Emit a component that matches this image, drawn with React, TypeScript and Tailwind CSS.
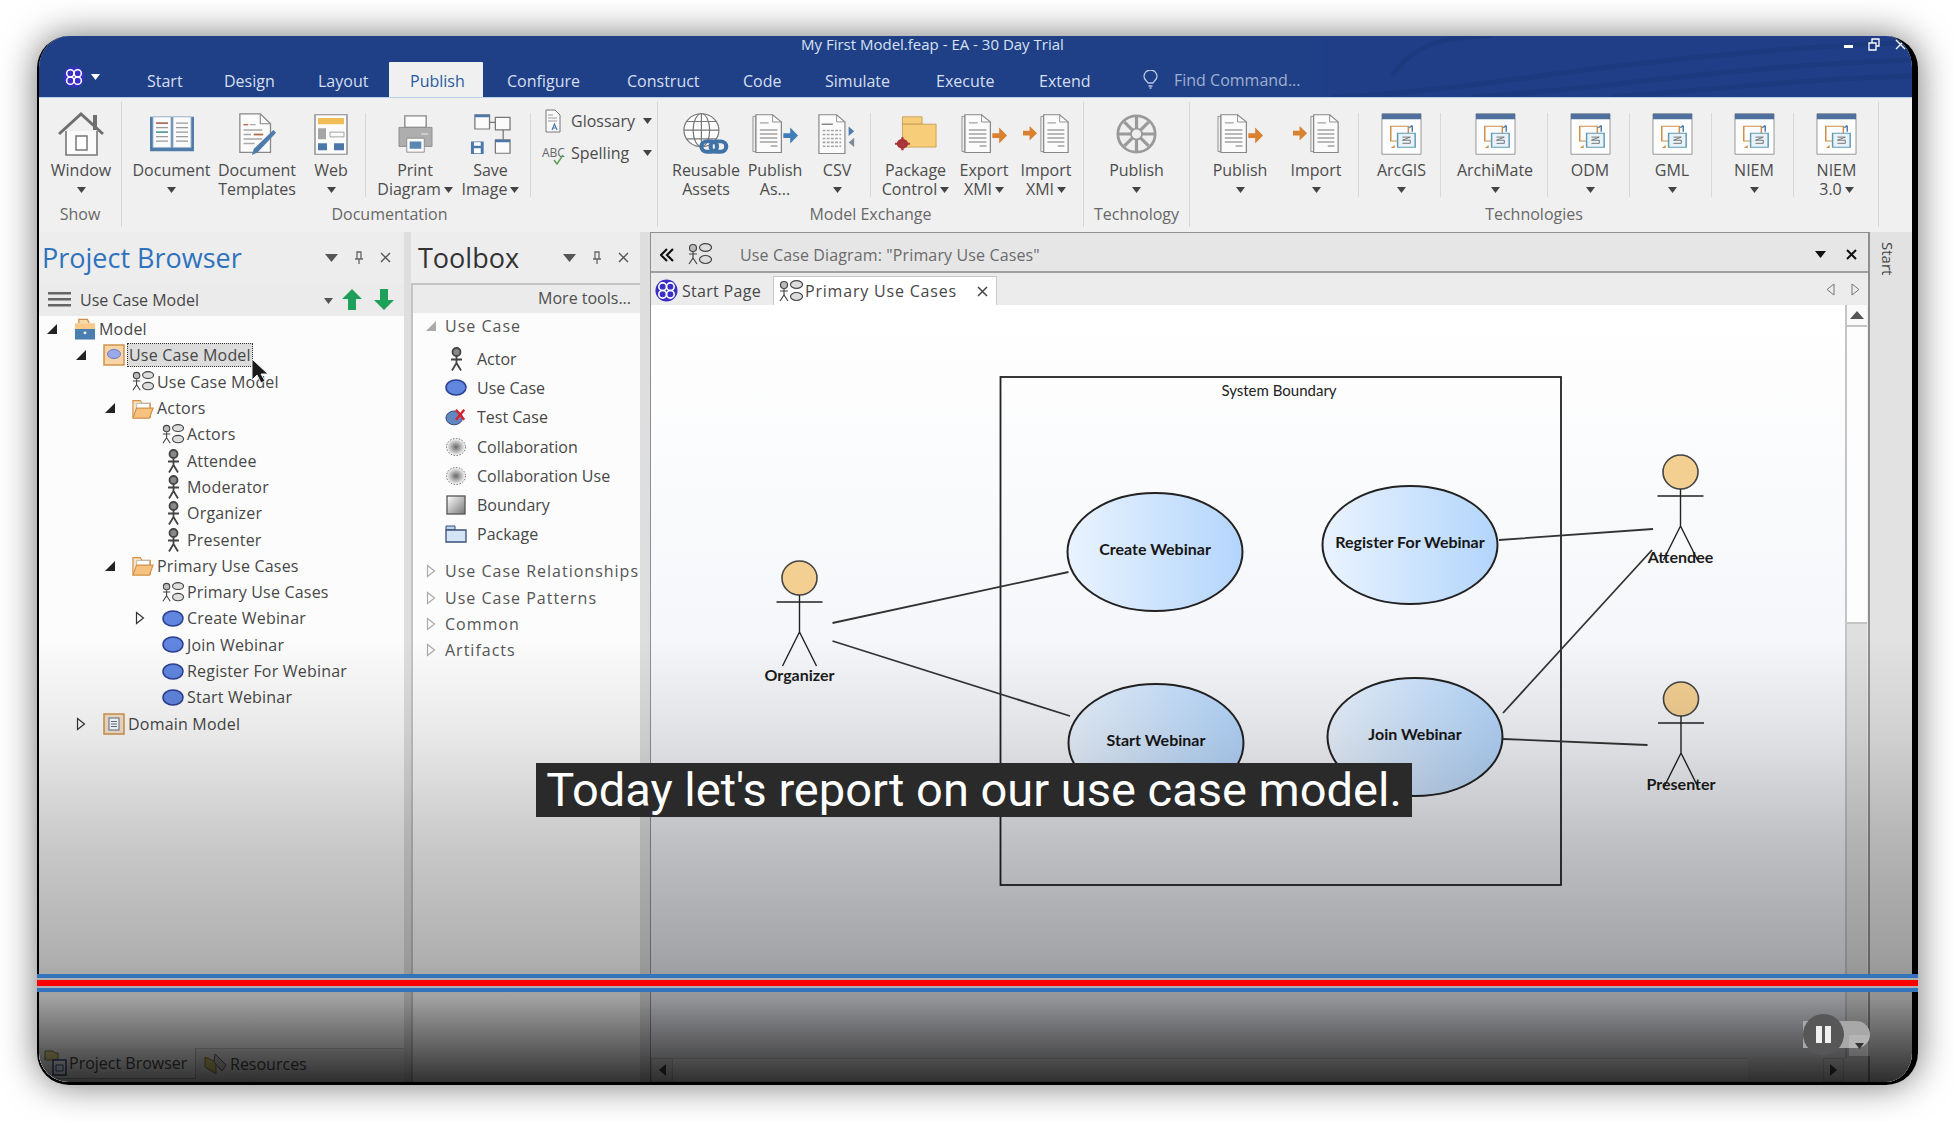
import React from "react";

const Caret = ({ c = "#444" }: { c?: string }) => (
  <svg width="9" height="6" viewBox="0 0 9 6" className="inline-block shrink-0"><path d="M0 0h9L4.5 6z" fill={c} /></svg>
);

const House = () => (
  <svg width="46" height="46" viewBox="0 0 46 46" fill="none">
    <path d="M8 20v24h31V20" fill="#fbfbfb" stroke="#777" strokeWidth="1.6" />
    <path d="M1 23 23 3l22 20" stroke="#6f6f6f" strokeWidth="3" />
    <path d="M35 4h4v15h-4z" fill="#6f6f6f" />
    <path d="M18 25h11v14H18z" fill="#fff" stroke="#777" strokeWidth="1.5" />
  </svg>
);
const Book = () => (
  <svg width="46" height="38" viewBox="0 0 46 42" preserveAspectRatio="none" fill="none">
    <path d="M1 2h44v38H1z" fill="#4f7cab" />
    <path d="M4 2h18v34H4zM24 2h18v34H24z" fill="#fafafa" stroke="#9db4c9" />
    <path d="M7 9h12M7 14h12M7 19h12M7 24h12M7 29h12" stroke="#999" strokeWidth="1.4" />
    <path d="M7 9h12" stroke="#b35a45" strokeWidth="1.4" />
    <path d="M7 19h12" stroke="#3f9a93" strokeWidth="1.4" />
    <path d="M27 9h12M27 14h12M27 19h12M27 24h12M27 29h12" stroke="#999" strokeWidth="1.4" />
  </svg>
);
const DocPen = () => (
  <svg width="39" height="43" viewBox="0 0 42 48" preserveAspectRatio="none" fill="none">
    <path d="M2 1h22l11 11v32H2z" fill="#fbfbfb" stroke="#888" strokeWidth="1.4" />
    <path d="M24 1v11h11" stroke="#888" strokeWidth="1.2" />
    <path d="M6 13h5M13 13h6M6 19h20M6 24h8M17 24h10M6 29h20M6 34h12" stroke="#a8a8a8" strokeWidth="1.5" />
    <path d="M6 13h5M17 24h10" stroke="#b9673f" strokeWidth="1.5" />
    <path d="M38 19 41 22 21 44l-6 3 2-7z" fill="#4f7cab" />
  </svg>
);
const Web = () => (
  <svg width="34" height="41" viewBox="0 0 34 52" preserveAspectRatio="none" fill="none">
    <path d="M1 1h32v50H1z" fill="#fbfbfb" stroke="#888" strokeWidth="1.4" />
    <path d="M4 5h26v8H4z" fill="#f0bc58" />
    <path d="M4 18h8v14H4z" fill="#a5a5a5" />
    <path d="M16 23h14v6H16z" stroke="#999" />
    <path d="M4 37h9v9H4zM20 37h10v9H20z" fill="#4a78ab" />
  </svg>
);
const Printer = () => (
  <svg width="35" height="38" viewBox="0 0 36 46" preserveAspectRatio="none" fill="none">
    <path d="M7 1h22v14H7z" fill="#fbfbfb" stroke="#888" strokeWidth="1.4" />
    <path d="M1 15h34v23H1z" fill="#aeaeae" stroke="#8a8a8a" />
    <path d="M24 23h7" stroke="#eee" strokeWidth="1.4" />
    <path d="M9 28h18v17H9z" fill="#fbfbfb" stroke="#888" />
    <path d="M12 32h12v9H12z" fill="#5a86b2" />
  </svg>
);
const SaveImg = () => (
  <svg width="41" height="40" viewBox="0 0 42 48" preserveAspectRatio="none" fill="none">
    <path d="M5 1h15v17H5z" fill="#fbfbfb" stroke="#777" strokeWidth="1.3" />
    <path d="M5 1h15v3H5z" fill="#4a78ab" />
    <path d="M26 4h15v15H26z" fill="#fbfbfb" stroke="#777" strokeWidth="1.3" />
    <path d="M20 10h6M34 19v12" stroke="#777" strokeWidth="1.3" />
    <path d="M26 31h15v16H26z" fill="#fbfbfb" stroke="#777" strokeWidth="1.3" />
    <path d="M26 31h15v3H26z" fill="#4a78ab" />
    <path d="M1 33h13v15H1z" fill="#4a78ab" />
    <path d="M4 34h7v4H4zM4 41h7v6H4z" fill="#fff" />
  </svg>
);
const Glossary = () => (
  <svg width="16" height="24" viewBox="0 0 16 24" fill="none">
    <path d="M1 1h9l5 5v17H1z" fill="#fbfbfb" stroke="#777" />
    <path d="M3 6h5M3 9h9M3 12h9" stroke="#999" />
    <path d="M7 21l2.500-6 2.500 6M8 19h3" stroke="#4a78ab" strokeWidth="1.2" />
  </svg>
);
const Globe = () => (
  <svg width="46" height="45" viewBox="0 0 50 52" preserveAspectRatio="none" fill="none">
    <g stroke="#777" strokeWidth="1.3" fill="#fdfdfd">
      <circle cx="20" cy="21" r="19" />
      <ellipse cx="20" cy="21" rx="9" ry="19" />
      <path d="M20 2v38M1 21h38M4 11h32M4 31h32" />
    </g>
    <rect x="20" y="34" width="17" height="12" rx="6" stroke="#3f73a8" strokeWidth="4.5" fill="none" />
    <rect x="30" y="34" width="17" height="12" rx="6" stroke="#3f73a8" strokeWidth="4.5" fill="none" />
  </svg>
);
const DocBase = ({ lines = true }: { lines?: boolean }) => (
  <g>
    <path d="M1 3h3v44H1z" fill="#eee" stroke="#888" />
    <path d="M4 1h17l9 9v38H4z" fill="#fbfbfb" stroke="#888" strokeWidth="1.3" />
    <path d="M21 1v9h9" stroke="#888" />
    {lines && <path d="M8 11h9M8 20h18M8 25h18M8 30h18M8 35h18M19 40h7" stroke="#a3a3a3" strokeWidth="1.6" />}
  </g>
);
const DocArrow = ({ c }: { c: string }) => (
  <svg width="47" height="40" viewBox="0 0 48 50" preserveAspectRatio="none" fill="none">
    <DocBase />
    <path d="M32 24h7v-7l8 10-8 10v-7h-7z" fill={c} />
  </svg>
);
const ImportDoc = () => (
  <svg width="47" height="40" viewBox="0 0 50 50" preserveAspectRatio="none" fill="none">
    <path d="M0 21h7v-6l8 9-8 9v-6H0z" fill="#d9812f" />
    <g transform="translate(18 0)"><DocBase /></g>
  </svg>
);
const Csv = () => (
  <svg width="39" height="41" viewBox="0 0 42 52" preserveAspectRatio="none" fill="none">
    <path d="M1 1h19l9 9v40H1z" fill="#fbfbfb" stroke="#888" strokeWidth="1.3" />
    <path d="M20 1v9h9" stroke="#888" />
    <path d="M4 13h12" stroke="#888" strokeWidth="2" />
    <path d="M5 21h20M5 26h20M5 31h20M5 36h20M5 41h20" stroke="#a3a3a3" strokeWidth="2" strokeDasharray="3 1.500" />
    <path d="M33 16l6 6-6 6z" fill="#4f7cab" />
    <path d="M39 30l-6 6 6 6z" fill="#7c8b9a" />
  </svg>
);
const Pkg = () => (
  <svg width="43" height="36" viewBox="-2 0 46 44" preserveAspectRatio="none" fill="none">
    <path d="M7 1h21v9H7z" fill="#f8cd79" stroke="#c39c55" />
    <path d="M7 10h36v28H7z" fill="#f8cd79" stroke="#c39c55" />
    <circle cx="7" cy="34" r="6" fill="#a8343a" />
    <circle cx="7" cy="34" r="2" fill="#f2d0c0" />
    <path d="M7 26v16M-1 34h16" stroke="#a8343a" strokeWidth="2.500" />
  </svg>
);
const Wheel = () => (
  <svg width="41" height="40" viewBox="0 0 44 44" preserveAspectRatio="none" fill="none" stroke="#9a9a9a">
    <circle cx="22" cy="22" r="20" strokeWidth="3" fill="#efefef" />
    <circle cx="22" cy="22" r="6" strokeWidth="2" fill="#efefef" />
    <path d="M22 3v13M22 28v13M3 22h13M28 22h13M9 9l9 9M26 26l9 9M35 9l-9 9M18 26l-9 9" strokeWidth="3.500" />
  </svg>
);
const Tech = () => (
  <svg width="41" height="42" viewBox="0 0 42 54" preserveAspectRatio="none" fill="none">
    <path d="M1 1h40v52H1z" fill="#fdfdfd" stroke="#8a8a8a" />
    <path d="M1 1h40v7H1z" fill="#4f6f9c" />
    <path d="M10 17h18v19H10z" stroke="#cf8f48" strokeWidth="1.500" />
    <path d="M17 26h18v18H17z" fill="#e8f2f8" stroke="#5f9ab5" strokeWidth="1.500" />
    <path d="M22 31h8l-8 4h8v4h-8" stroke="#666" />
    <path d="M32 16v8M32 16l-3 3" stroke="#4f7cab" strokeWidth="1.500" />
    <path d="M10 45l4-4v4z" fill="#cf8f48" />
  </svg>
);
const MiniDiagram = () => (
  <svg width="24" height="23" viewBox="0 0 24 23" fill="none" stroke="#444" strokeWidth="1.200">
    <circle cx="5" cy="5" r="3.500" fill="#bbb" />
    <path d="M5 9v6M1 11h8M5 15l-4 6M5 15l4 6" />
    <ellipse cx="17.500" cy="4.500" rx="6" ry="3.800" fill="#ddd" />
    <ellipse cx="17.500" cy="16.500" rx="6" ry="4" fill="#ddd" />
  </svg>
);
const LogoMark = ({ s = 22 }: { s?: number }) => (
  <svg width={s} height={s} viewBox="0 0 24 24" fill="none">
    <circle cx="12" cy="12" r="11.500" fill="#3a2fc4" />
    <g stroke="#fff" strokeWidth="1.700">
      <circle cx="8" cy="8" r="4" />
      <circle cx="16" cy="8" r="4" />
      <circle cx="8" cy="16" r="4" />
      <circle cx="16" cy="16" r="4" />
    </g>
  </svg>
);

type ItemP = { w: string; icon?: React.ReactNode; a: string; b?: string; caret?: boolean; pl?: string };
const Item = ({ w, icon, a, b, caret, pl = "" }: ItemP) => (
  <div className={`${w} ${pl} shrink-0 flex flex-col items-center pt-[8px] whitespace-nowrap`}>
    <div className="h-[48px] flex items-center justify-center">{icon}</div>
    <div className="h-[19px] mt-[3px] leading-[19px]">{a}</div>
    <div className="h-[19px] leading-[19px] flex items-center gap-[3px]">
      {b && <span>{b}</span>}
      {caret && <Caret />}
    </div>
  </div>
);
const Sep = ({ m = "" }: { m?: string }) => <div className={`w-px shrink-0 h-[84px] mt-[11px] bg-[#d8d8d8] ${m}`} />;

const Group = ({ w, label, children }: { w: string; label: string; children: React.ReactNode }) => (
  <div className={`${w} shrink-0 h-[125px] mt-[4px] border-r border-[#d6d6d6] flex flex-col`}>
    <div className="flex h-[102px]">{children}</div>
    <div className="text-center text-[16px] leading-[20px] text-[#686868] whitespace-nowrap">{label}</div>
  </div>
);

const tabs = [
  { t: "Start", c: "w-[77px]" },
  { t: "Design", c: "w-[94px]" },
  { t: "Layout", c: "w-[71px]" },
  { t: "Publish", c: "w-[94px] pl-[21px] bg-[#f0f0f0] text-[#2b5a9e] h-[35px] rounded-t-[1px]" },
  { t: "Configure", c: "w-[144px] pl-[24px]" },
  { t: "Construct", c: "w-[116px]" },
  { t: "Code", c: "w-[82px]" },
  { t: "Simulate", c: "w-[111px]" },
  { t: "Execute", c: "w-[103px]" },
  { t: "Extend", c: "w-[111px]" },
];

const Arrow = ({ open, light }: { open: boolean; light?: boolean }) =>
  open ? (
    <svg width="12" height="12" viewBox="0 0 12 12"><path d="M11 1v10H1z" fill={light ? "#aaa" : "#222"} /></svg>
  ) : (
    <svg width="10" height="14" viewBox="0 0 10 14" fill="none"><path d="M1.500 1.500 8.500 7l-7 5.500z" stroke={light ? "#aaa" : "#333"} strokeWidth="1.200" /></svg>
  );

const TActor = () => (
  <svg width="13" height="24" viewBox="0 0 13 24" fill="none" stroke="#444" strokeWidth="1.800">
    <circle cx="6.500" cy="5" r="4" fill="#888" />
    <path d="M6.500 9v8M1 12.500h11M6.500 16l-4.500 7.500M6.500 16l4.500 7.500" />
  </svg>
);
const TUC = () => (
  <svg width="22" height="17" viewBox="0 0 22 17"><ellipse cx="11" cy="8.500" rx="10" ry="7.500" fill="#6186e0" stroke="#2b3f8f" strokeWidth="1.500" /></svg>
);
const TFolder = () => (
  <svg width="24" height="23" viewBox="0 0 24 23" fill="none">
    <path d="M1 3h8l2 3h9v15H1z" fill="#f6e3c5" stroke="#d4914a" strokeWidth="1.300" />
    <path d="M5 6h14v6H5z" fill="#fff" stroke="#aaa" strokeWidth=".8" />
    <path d="M1 22 5 11h18l-4 11z" fill="#f7c27f" stroke="#d4914a" strokeWidth="1.300" />
  </svg>
);
const TModel = () => (
  <svg width="23" height="23" viewBox="0 0 23 23" fill="none">
    <path d="M5 5V1h9l2 4" stroke="#c8914a" strokeWidth="1.300" fill="#f7d9a8" />
    <path d="M1 5h21v8H1z" fill="#f8c98a" />
    <path d="M1 11h21v11H1z" fill="#4a7eae" />
    <circle cx="11.500" cy="15" r="1.500" fill="#fff" />
  </svg>
);
const TUCPkg = () => (
  <svg width="22" height="22" viewBox="0 0 22 22">
    <rect x="1" y="1" width="20" height="20" fill="#f7d3a8" stroke="#cf924c" strokeWidth="1.500" />
    <ellipse cx="11" cy="10" rx="6.500" ry="4.500" fill="#9aa9ea" stroke="#6a7cc6" />
  </svg>
);
const TDomain = () => (
  <svg width="22" height="22" viewBox="0 0 22 22" fill="none">
    <rect x="1" y="1" width="20" height="20" fill="#f3e1c8" stroke="#cf924c" strokeWidth="1.500" />
    <rect x="6" y="5" width="10" height="12" fill="#fff" stroke="#5f6f8a" />
    <path d="M8 8.500h6M8 11h6M8 13.500h6" stroke="#5f6f8a" />
  </svg>
);

const tree: { t: string; lv: string; arrow?: "o" | "c"; ic: React.ReactNode; sel?: boolean }[] = [
  { t: "Model", lv: "pl-[3px]", arrow: "o", ic: <TModel /> },
  { t: "Use Case Model", lv: "pl-[32px]", arrow: "o", ic: <TUCPkg />, sel: true },
  { t: "Use Case Model", lv: "pl-[61px]", ic: <MiniDiagram /> },
  { t: "Actors", lv: "pl-[61px]", arrow: "o", ic: <TFolder /> },
  { t: "Actors", lv: "pl-[91px]", ic: <MiniDiagram /> },
  { t: "Attendee", lv: "pl-[91px]", ic: <TActor /> },
  { t: "Moderator", lv: "pl-[91px]", ic: <TActor /> },
  { t: "Organizer", lv: "pl-[91px]", ic: <TActor /> },
  { t: "Presenter", lv: "pl-[91px]", ic: <TActor /> },
  { t: "Primary Use Cases", lv: "pl-[61px]", arrow: "o", ic: <TFolder /> },
  { t: "Primary Use Cases", lv: "pl-[91px]", ic: <MiniDiagram /> },
  { t: "Create Webinar", lv: "pl-[91px]", arrow: "c", ic: <TUC /> },
  { t: "Join Webinar", lv: "pl-[91px]", ic: <TUC /> },
  { t: "Register For Webinar", lv: "pl-[91px]", ic: <TUC /> },
  { t: "Start Webinar", lv: "pl-[91px]", ic: <TUC /> },
  { t: "Domain Model", lv: "pl-[32px]", arrow: "c", ic: <TDomain /> },
];

const Collab = () => (
  <svg width="22" height="20" viewBox="0 0 22 20" fill="none">
    <defs>
      <radialGradient id="cg"><stop offset="0" stopColor="#666" /><stop offset="1" stopColor="#fafafa" /></radialGradient>
    </defs>
    <ellipse cx="11" cy="10" rx="9.500" ry="8.500" stroke="#666" strokeDasharray="1.500 1.500" fill="url(#cg)" />
  </svg>
);
const BoxIc = () => (
  <svg width="20" height="20" viewBox="0 0 20 20"><defs><linearGradient id="bg1" x1="0" y1="0" x2="1" y2="1"><stop offset="0" stopColor="#fff" /><stop offset="1" stopColor="#777" /></linearGradient></defs><rect x="1" y="1" width="18" height="18" fill="url(#bg1)" stroke="#555" strokeWidth="1.300" /></svg>
);
const PkgIc = () => (
  <svg width="22" height="18" viewBox="0 0 22 18" fill="none"><path d="M1 1h9v4H1z" fill="#bcd3ee" stroke="#3a4f7a" /><path d="M1 5h20v12H1z" fill="#d5e4f6" stroke="#3a4f7a" strokeWidth="1.300" /></svg>
);
const TestIc = () => (
  <svg width="24" height="20" viewBox="0 0 24 20"><ellipse cx="10" cy="11" rx="9" ry="7.500" fill="#6186c0" stroke="#2b3f6f" /><path d="M12 2l9 11M21 2l-9 11" stroke="#d8232a" strokeWidth="2.500" /></svg>
);
const tools = [
  { t: "Actor", i: <TActor /> },
  { t: "Use Case", i: <TUC /> },
  { t: "Test Case", i: <TestIc /> },
  { t: "Collaboration", i: <Collab /> },
  { t: "Collaboration Use", i: <Collab /> },
  { t: "Boundary", i: <BoxIc /> },
  { t: "Package", i: <PkgIc /> },
];

const PanelControls = () => (
  <div className="flex items-center gap-[16px] text-[#555]">
    <svg width="13" height="8" viewBox="0 0 13 8"><path d="M0 0h13L6.500 8z" fill="#555" /></svg>
    <svg width="10" height="14" viewBox="0 0 10 14" fill="none" stroke="#666" strokeWidth="1.300"><path d="M3 1h4v7H3zM1 8h8M5 8v5" /></svg>
    <svg width="11" height="11" viewBox="0 0 11 11" stroke="#555" strokeWidth="1.400"><path d="M1 1l9 9M10 1l-9 9" /></svg>
  </div>
);

const diagramFont = "Lato,'Liberation Sans',sans-serif";

const Actor = ({ x, top, label, ly }: { x: number; top: number; label: string; ly: number }) => (
  <g stroke="#222" strokeWidth="1.400" fill="none">
    <ellipse cx={x} cy={top + 17} rx="17.500" ry="17" fill="#f3cf92" stroke="#444" strokeWidth="1.600" />
    <path d={`M${x} ${top + 34}V${top + 71}M${x - 23} ${top + 41}H${x + 23}M${x} ${top + 71}L${x - 17} ${top + 105}M${x} ${top + 71}L${x + 17} ${top + 105}`} />
    <text x={x} y={ly} textAnchor="middle" fontSize="16" fontWeight="700" fill="#1c1c1c" stroke="none" fontFamily={diagramFont}>{label}</text>
  </g>
);
const UseCase = ({ cx, cy, t }: { cx: number; cy: number; t: string }) => (
  <g>
    <ellipse cx={cx} cy={cy} rx="87.500" ry="59" fill="url(#ucg)" stroke="#222" strokeWidth="2" />
    <text x={cx} y={cy + 3} textAnchor="middle" fontSize="16" fontWeight="700" fill="#161616" fontFamily={diagramFont}>{t}</text>
  </g>
);

export default function App() {
  return (
    <div className="relative w-[1954px] h-[1122px] bg-white overflow-hidden font-['Open_Sans',sans-serif] text-[16px] text-[#474747]">
      <div className="ml-[37px] mt-[36px] inline-block align-top rounded-[32px] shadow-[0_0_36px_rgba(0,0,0,0.55)]">
        <div className="relative w-[1881px] h-[1049px] rounded-[32px] overflow-hidden bg-[#f0f0f0] border-l-2 border-r-[6px] border-b-[3px] border-black flex flex-col">
          {/* title bar */}
          <div className="relative bg-[#1f3f87] h-[61px] shrink-0 overflow-hidden">
            <svg className="absolute right-0 top-0" width="640" height="61" viewBox="0 0 640 61" fill="none" stroke="#193675" strokeWidth="5" opacity=".45">
              <path d="M60 61C220 55 330 20 640 6M200 61C320 55 450 30 640 24M340 61C430 55 540 42 640 40M120 40C140 10 170 0 220 0" />
            </svg>
            <div className="relative flex items-center h-[26px] pb-[10px] text-[#d8e2f2] text-[15px] leading-[16px] whitespace-nowrap">
              <div className="ml-[762px]">My First Model.feap - EA - 30 Day Trial</div>
              <div className="ml-auto mr-[6px] flex items-center gap-[15px] text-white">
                <div className="w-[9px] h-[3px] bg-white mt-[4px]" />
                <svg width="12" height="13" viewBox="0 0 12 13" fill="none" stroke="#fff" strokeWidth="1.300"><path d="M1 5h7v7H1zM4 5V1h7v7H8" /></svg>
                <svg width="11" height="11" viewBox="0 0 11 11" fill="none" stroke="#fff" strokeWidth="1.300"><path d="M1 1l9 9M10 1l-9 9" /></svg>
              </div>
            </div>
            <div className="relative flex items-end h-[35px] text-[#d5dff0] whitespace-nowrap">
              <div className="w-[108px] shrink-0 h-[35px] flex items-center pl-[24px] gap-[6px] pb-[6px]">
                <LogoMark />
                <Caret c="#fff" />
              </div>
              {tabs.map((t) => (
                <div key={t.t} className={`${t.c} shrink-0 h-[35px] leading-[38px]`}>{t.t}</div>
              ))}
              <div className="h-[35px] flex items-center text-[#9fb0cf] gap-[16px]">
                <svg width="15" height="19" viewBox="0 0 15 19" fill="none" stroke="#b8c6df" strokeWidth="1.300" className="ml-[-7px]"><path d="M5 13C3 10 1 9 1 6.500a6.500 6.500 0 0 1 13 0C14 9 12 10 10 13zM5.500 16h4M6.500 18h2" /></svg>
                <span>Find Command...</span>
              </div>
            </div>
          </div>
          {/* ribbon */}
          <div className="h-[135px] shrink-0 bg-[#f0f0f0] border-t-[1px] border-[#b8cfe9] flex text-[16px] text-[#4c4c4c]">
            <Group w="w-[83px]" label="Show">
              <Item w="w-[83px]" pl="pl-[1px]" icon={<House />} a="Window" caret />
            </Group>
            <Group w="w-[536px]" label="Documentation">
              <div className="w-[7px] shrink-0" />
              <Item w="w-[85px]" icon={<Book />} a="Document" caret />
              <Item w="w-[86px]" icon={<DocPen />} a="Document" b="Templates" />
              <Item w="w-[62px]" icon={<Web />} a="Web" caret />
              <Sep m="ml-[3px]" />
              <Item w="w-[96px]" pl="pl-[2px]" icon={<Printer />} a="Print" b="Diagram" caret />
              <Item w="w-[57px]" icon={<SaveImg />} a="Save" b="Image" caret />
              <Sep m="ml-[11px]" />
              <div className="ml-[14px] mt-[7px] flex flex-col gap-[8px] whitespace-nowrap">
                <div className="flex items-center h-[24px]"><Glossary /><span className="ml-[10px] w-[72px]">Glossary</span><Caret /></div>
                <div className="relative flex items-center h-[24px]">
                  <span className="w-[23px] text-[12px] text-[#666] leading-none -ml-[3px] mr-[6px]">ABC</span>
                  <svg className="absolute left-[8px] top-[13px]" width="11" height="11" viewBox="0 0 11 11" fill="none" stroke="#5aa05a" strokeWidth="1.500"><path d="M1 6l3 4 6-9" /></svg>
                  <span className="w-[72px]">Spelling</span><Caret />
                </div>
              </div>
            </Group>
            <Group w="w-[426px]" label="Model Exchange">
              <div className="w-[10px] shrink-0" />
              <Item w="w-[76px]" icon={<Globe />} a="Reusable" b="Assets" />
              <Item w="w-[62px]" icon={<DocArrow c="#3f7db8" />} a="Publish" b="As..." />
              <Item w="w-[62px]" icon={<Csv />} a="CSV" caret />
              <Sep m="ml-[2px]" />
              <Item w="w-[87px]" pl="pl-[2px]" icon={<Pkg />} a="Package" b="Control" caret />
              <Item w="w-[52px]" icon={<DocArrow c="#d9812f" />} a="Export" b="XMI" caret />
              <Item w="w-[72px]" icon={<ImportDoc />} a="Import" b="XMI" caret />
            </Group>
            <Group w="w-[106px]" label="Technology">
              <Item w="w-[105px]" icon={<Wheel />} a="Publish" caret />
            </Group>
            <Group w="w-[689px]" label="Technologies">
              <Item w="w-[100px]" icon={<DocArrow c="#d9812f" />} a="Publish" caret />
              <Item w="w-[52px]" icon={<ImportDoc />} a="Import" caret />
              <Sep m="ml-[16px]" />
              <Item w="w-[81px]" pl="pl-[4px]" icon={<Tech />} a="ArcGIS" caret />
              <Sep />
              <Item w="w-[106px]" pl="pl-[2px]" icon={<Tech />} a="ArchiMate" caret />
              <Sep />
              <Item w="w-[81px]" pl="pl-[3px]" icon={<Tech />} a="ODM" caret />
              <Sep />
              <Item w="w-[81px]" pl="pl-[3px]" icon={<Tech />} a="GML" caret />
              <Sep />
              <Item w="w-[81px]" pl="pl-[3px]" icon={<Tech />} a="NIEM" caret />
              <Sep />
              <Item w="w-[84px]" pl="pl-[1px]" icon={<Tech />} a="NIEM" b="3.0" caret />
            </Group>
          </div>
          {/* main */}
          <div className="flex-1 flex min-h-0">
            {/* browser */}
            <div className="w-[365px] shrink-0 flex flex-col bg-[#f3f3f3]">
              <div className="h-[51px] shrink-0 flex items-center justify-between pl-[3px] pr-[13px] bg-[#ededed]">
                <span className="text-[27px] text-[#2f72bd] leading-none">Project Browser</span>
                <PanelControls />
              </div>
              <div className="h-[33px] shrink-0 flex items-center bg-[#ebebeb] pl-[9px]">
                <svg width="23" height="15" viewBox="0 0 23 15"><path d="M0 0h23v2.500H0zM0 6h23v2.500H0zM0 12h23v2.500H0z" fill="#666" /></svg>
                <span className="ml-[9px]">Use Case Model</span>
                <span className="ml-[125px]"><Caret c="#555" /></span>
                <svg className="ml-[9px]" width="20" height="21" viewBox="0 0 20 21"><path d="M10 0l10 10h-6v11H6V10H0z" fill="#1fa05a" /></svg>
                <svg className="ml-[12px]" width="20" height="21" viewBox="0 0 20 21"><path d="M10 21 0 11h6V0h8v11h6z" fill="#1fa05a" /></svg>
              </div>
              <div className="flex-1 bg-[#fcfcfc] min-h-0">
                {tree.map((r, i) => (
                  <div key={i} className={`${r.lv} h-[26.3px] flex items-center whitespace-nowrap tracking-[0.2px]`}>
                    <div className="w-[20px] shrink-0 flex justify-center">{r.arrow && <Arrow open={r.arrow === "o"} />}</div>
                    <div className="w-[22px] ml-[12px] mr-[3px] shrink-0 flex justify-center">{r.ic}</div>
                    <span className={r.sel ? "px-[1px] -ml-[1px] h-[24px] leading-[22px] bg-[#dcdcdc] border border-dotted border-[#333]" : ""}>{r.t}</span>
                  </div>
                ))}
              </div>
              <div className="h-[34px] shrink-0 flex bg-[#ececec] border-t border-[#cfcfcf] whitespace-nowrap">
                <div className="w-[157px] -mt-px h-[31px] bg-[#f7f7f7] border-r border-b border-[#bbb] flex items-center gap-[2px] pl-[5px]">
                  <svg width="23" height="26" viewBox="0 0 23 26" fill="none"><path d="M1 1h8l2 2h3v7H1z" fill="#e0d88a" stroke="#8a8040" /><path d="M9 10h13v15H9z" fill="#fff" stroke="#3a4f9a" strokeWidth="1.500" /><path d="M12 15h7v6h-7z" stroke="#3a4f9a" /></svg>
                  <span>Project Browser</span>
                </div>
                <div className="flex items-center gap-[2px] pl-[8px] pb-[3px]">
                  <svg width="24" height="24" viewBox="0 0 24 24" fill="none"><path d="M1 5l11 5v12L1 15z" fill="#d8cc70" stroke="#8a8040" /><path d="M11 2l11 11-4 6-8-9z" fill="#ccc" stroke="#666" /></svg>
                  <span>Resources</span>
                </div>
              </div>
            </div>
            <div className="w-[7px] shrink-0 bg-[#dedede]" />
            {/* toolbox */}
            <div className="w-[229px] shrink-0 flex flex-col bg-[#ededed]">
              <div className="h-[51px] shrink-0 flex items-center justify-between pl-[7px] pr-[11px]">
                <span className="text-[27px] text-[#333] leading-none">Toolbox</span>
                <PanelControls />
              </div>
              <div className="flex-1 bg-[#fcfcfc] border-t-2 border-l-2 border-[#c4c4c4] min-h-0 overflow-hidden whitespace-nowrap">
                <div className="h-[28px] bg-[#ebebeb] text-right pr-[9px] leading-[26px] text-[#4f4f4f]">More tools...</div>
                <div className="h-[26px] flex items-center pl-[12px] tracking-[1px] text-[#555]">
                  <span className="w-[20px]"><Arrow open light /></span><span>Use Case</span>
                </div>
                <div className="mt-[5px]">
                  {tools.map((t) => (
                    <div key={t.t} className="h-[29.300px] flex items-center">
                      <div className="w-[22px] ml-[32px] flex justify-center">{t.i}</div>
                      <span className="ml-[10px]">{t.t}</span>
                    </div>
                  ))}
                </div>
                <div className="mt-[9px] tracking-[1px] text-[#555]">
                  {["Use Case Relationships", "Use Case Patterns", "Common", "Artifacts"].map((t) => (
                    <div key={t} className="h-[26.300px] flex items-center pl-[13px]">
                      <span className="w-[19px]"><Arrow open={false} light /></span>
                      <span>{t}</span>
                    </div>
                  ))}
                </div>
              </div>
            </div>
            <div className="w-[10px] shrink-0 bg-[#dedede]" />
            {/* doc panel */}
            <div className="w-[1220px] shrink-0 flex flex-col border-l border-t border-r-2 border-[#8f8f8f] bg-[#ececec] whitespace-nowrap">
              <div className="h-[40px] shrink-0 flex items-center border-b-2 border-[#a0a0a0] bg-[#e6e6e6] pt-[5px] pl-[9px] pr-[11px]">
                <svg width="15" height="14" viewBox="0 0 15 14" fill="none" stroke="#111" strokeWidth="2.200"><path d="M7 1 1 7l6 6M13 1 7 7l6 6" /></svg>
                <span className="ml-[13px]"><MiniDiagram /></span>
                <span className="ml-[28px] text-[#6b6b6b] tracking-[0.13px]">Use Case Diagram: "Primary Use Cases"</span>
                <span className="ml-auto"><svg width="11" height="7" viewBox="0 0 11 7"><path d="M0 0h11L5.500 7z" fill="#111" /></svg></span>
                <svg className="ml-[20px]" width="11" height="11" viewBox="0 0 11 11" stroke="#111" strokeWidth="2"><path d="M1 1l9 9M10 1l-9 9" /></svg>
              </div>
              <div className="h-[32px] shrink-0 flex items-end bg-[#ececec] pl-[4px] pr-[8px]">
                <div className="w-[118px] h-[29px] flex items-center gap-[4px] tracking-[0.3px]">
                  <LogoMark s={23} />
                  <span>Start Page</span>
                </div>
                <div className="w-[224px] h-[29px] bg-white border-l border-r border-t border-[#c9c9c9] flex items-center pl-[5px] tracking-[0.8px]">
                  <MiniDiagram />
                  <span className="ml-[2px]">Primary Use Cases</span>
                  <svg className="ml-[20px]" width="11" height="11" viewBox="0 0 11 11" stroke="#444" strokeWidth="1.500"><path d="M1 1l9 9M10 1l-9 9" /></svg>
                </div>
                <div className="ml-auto self-center flex gap-[16px]">
                  <svg width="9" height="13" viewBox="0 0 9 13" fill="none" stroke="#777"><path d="M8 1 1 6.500 8 12z" /></svg>
                  <svg width="9" height="13" viewBox="0 0 9 13" fill="none" stroke="#777"><path d="M1 1l7 5.500L1 12z" /></svg>
                </div>
              </div>
              <div className="flex-1 flex min-h-0">
                <div className="flex-1 min-w-0 bg-[linear-gradient(180deg,#ffffff_0%,#f2f4f8_60%,#e6e7ed_100%)]">
                  <svg width="1196" height="752" viewBox="651 305 1196 752" className="block">
                    <defs>
                      <linearGradient id="ucg" x1="0" y1="0" x2="1" y2="0">
                        <stop offset="0" stopColor="#eaf3fe" />
                        <stop offset="1" stopColor="#b3d5fb" />
                      </linearGradient>
                    </defs>
                    <rect x="1000.500" y="377" width="560.500" height="508" fill="none" stroke="#222" strokeWidth="1.800" />
                    <text x="1279" y="396" textAnchor="middle" fontSize="15" fill="#222" fontFamily={diagramFont}>System Boundary</text>
                    <UseCase cx={1155} cy={552} t="Create Webinar" />
                    <UseCase cx={1410} cy={545} t="Register For Webinar" />
                    <UseCase cx={1156} cy={743} t="Start Webinar" />
                    <UseCase cx={1415} cy={737} t="Join Webinar" />
                    <g stroke="#333" strokeWidth="1.800">
                      <path d="M832.500 623 1068.500 572M832.500 641 1070 716M1499 540 1653 529M1503 713 1652 550M1503 739 1647.500 745" fill="none" />
                    </g>
                    <Actor x={799.500} top={561} label="Organizer" ly={681} />
                    <Actor x={1680.500} top={455} label="Attendee" ly={563} />
                    <Actor x={1681} top={682} label="Presenter" ly={790} />
                  </svg>
                </div>
                <div className="w-[22px] shrink-0 mr-px flex flex-col border-l-2 border-[#c4c4c4]">
                  <div className="h-[22px] bg-[#fafafa] border-b-2 border-[#c4c4c4] flex items-center justify-center">
                    <svg width="14" height="8" viewBox="0 0 14 8"><path d="M7 0l7 8H0z" fill="#555" /></svg>
                  </div>
                  <div className="h-[297px] bg-[#fdfdfd] border-b-2 border-[#c4c4c4]" />
                  <div className="flex-1 bg-[#dfdfdf]" />
                </div>
              </div>
              <div className="h-[24px] shrink-0 flex bg-[#e4e4e4]">
                <div className="w-[22px] border border-[#c4c4c4] flex items-center justify-center">
                  <svg width="7" height="12" viewBox="0 0 7 12"><path d="M7 0v12L0 6z" fill="#444" /></svg>
                </div>
                <div className="w-[1075px] border-y border-[#d0d0d0] bg-[#f1f1f1]" />
                <div className="ml-auto mr-[24px] w-[21px] border border-[#c4c4c4] flex items-center justify-center">
                  <svg width="7" height="12" viewBox="0 0 7 12"><path d="M0 0v12l7-6z" fill="#444" /></svg>
                </div>
              </div>
            </div>
            {/* start strip */}
            <div className="flex-1 bg-[#e2e2e2] pt-[10px] pl-[8px]">
              <div className="[writing-mode:vertical-rl] text-[15px] leading-[20px] text-[#444]">Start</div>
            </div>
          </div>
          {/* youtube overlays */}
          <svg className="absolute left-[212px] top-[322px]" width="18" height="26" viewBox="0 0 18 26"><path d="M1 1v21l5-5 4 8 4-2-4-7h7z" fill="#1a1a1a" stroke="#eee" strokeWidth="1" /></svg>
          <div className="absolute inset-x-0 bottom-0 h-[445px] pointer-events-none bg-[linear-gradient(180deg,rgba(0,0,0,0)_0%,rgba(0,0,0,0.08)_22%,rgba(0,0,0,0.2)_46%,rgba(0,0,0,0.3)_72%,rgba(0,0,0,0.36)_81%,rgba(0,0,0,0.52)_88%,rgba(0,0,0,0.66)_94%,rgba(0,0,0,0.8)_100%)]" />
          <div className="absolute left-[1764px] top-[985px] w-[67px] h-[27px] rounded-r-full bg-[#a8a8a8]" />
          <div className="absolute left-[1810px] top-[999px] w-[21px] h-[21px] bg-[#ffffff24] flex items-center justify-center">
            <svg width="9" height="6" viewBox="0 0 9 6"><path d="M0 0h9L4.500 6z" fill="#333" /></svg>
          </div>
          <div className="absolute left-[1764px] top-[978px] w-[41px] h-[41px] rounded-full bg-[#575757] flex items-center justify-center gap-[3px]">
            <div className="w-[6px] h-[17px] bg-[#f0f0f0]" />
            <div className="w-[6px] h-[17px] bg-[#f0f0f0]" />
          </div>
        </div>
      </div>
      <div className="absolute left-[37px] top-[974px] w-[1881px] h-[18px] bg-[#b0b0b0] border-y-[4px] border-[#3374bd]">
        <div className="h-[6px] mt-[2px] bg-[#ff0000]" />
      </div>
      <div className="absolute left-[536px] top-[763px] w-[876px] h-[54px] bg-[#2a2a2a] text-white text-center font-['Roboto',sans-serif] text-[47px] leading-[54px] whitespace-nowrap">
        Today let's report on our use case model.
      </div>
    </div>
  );
}
